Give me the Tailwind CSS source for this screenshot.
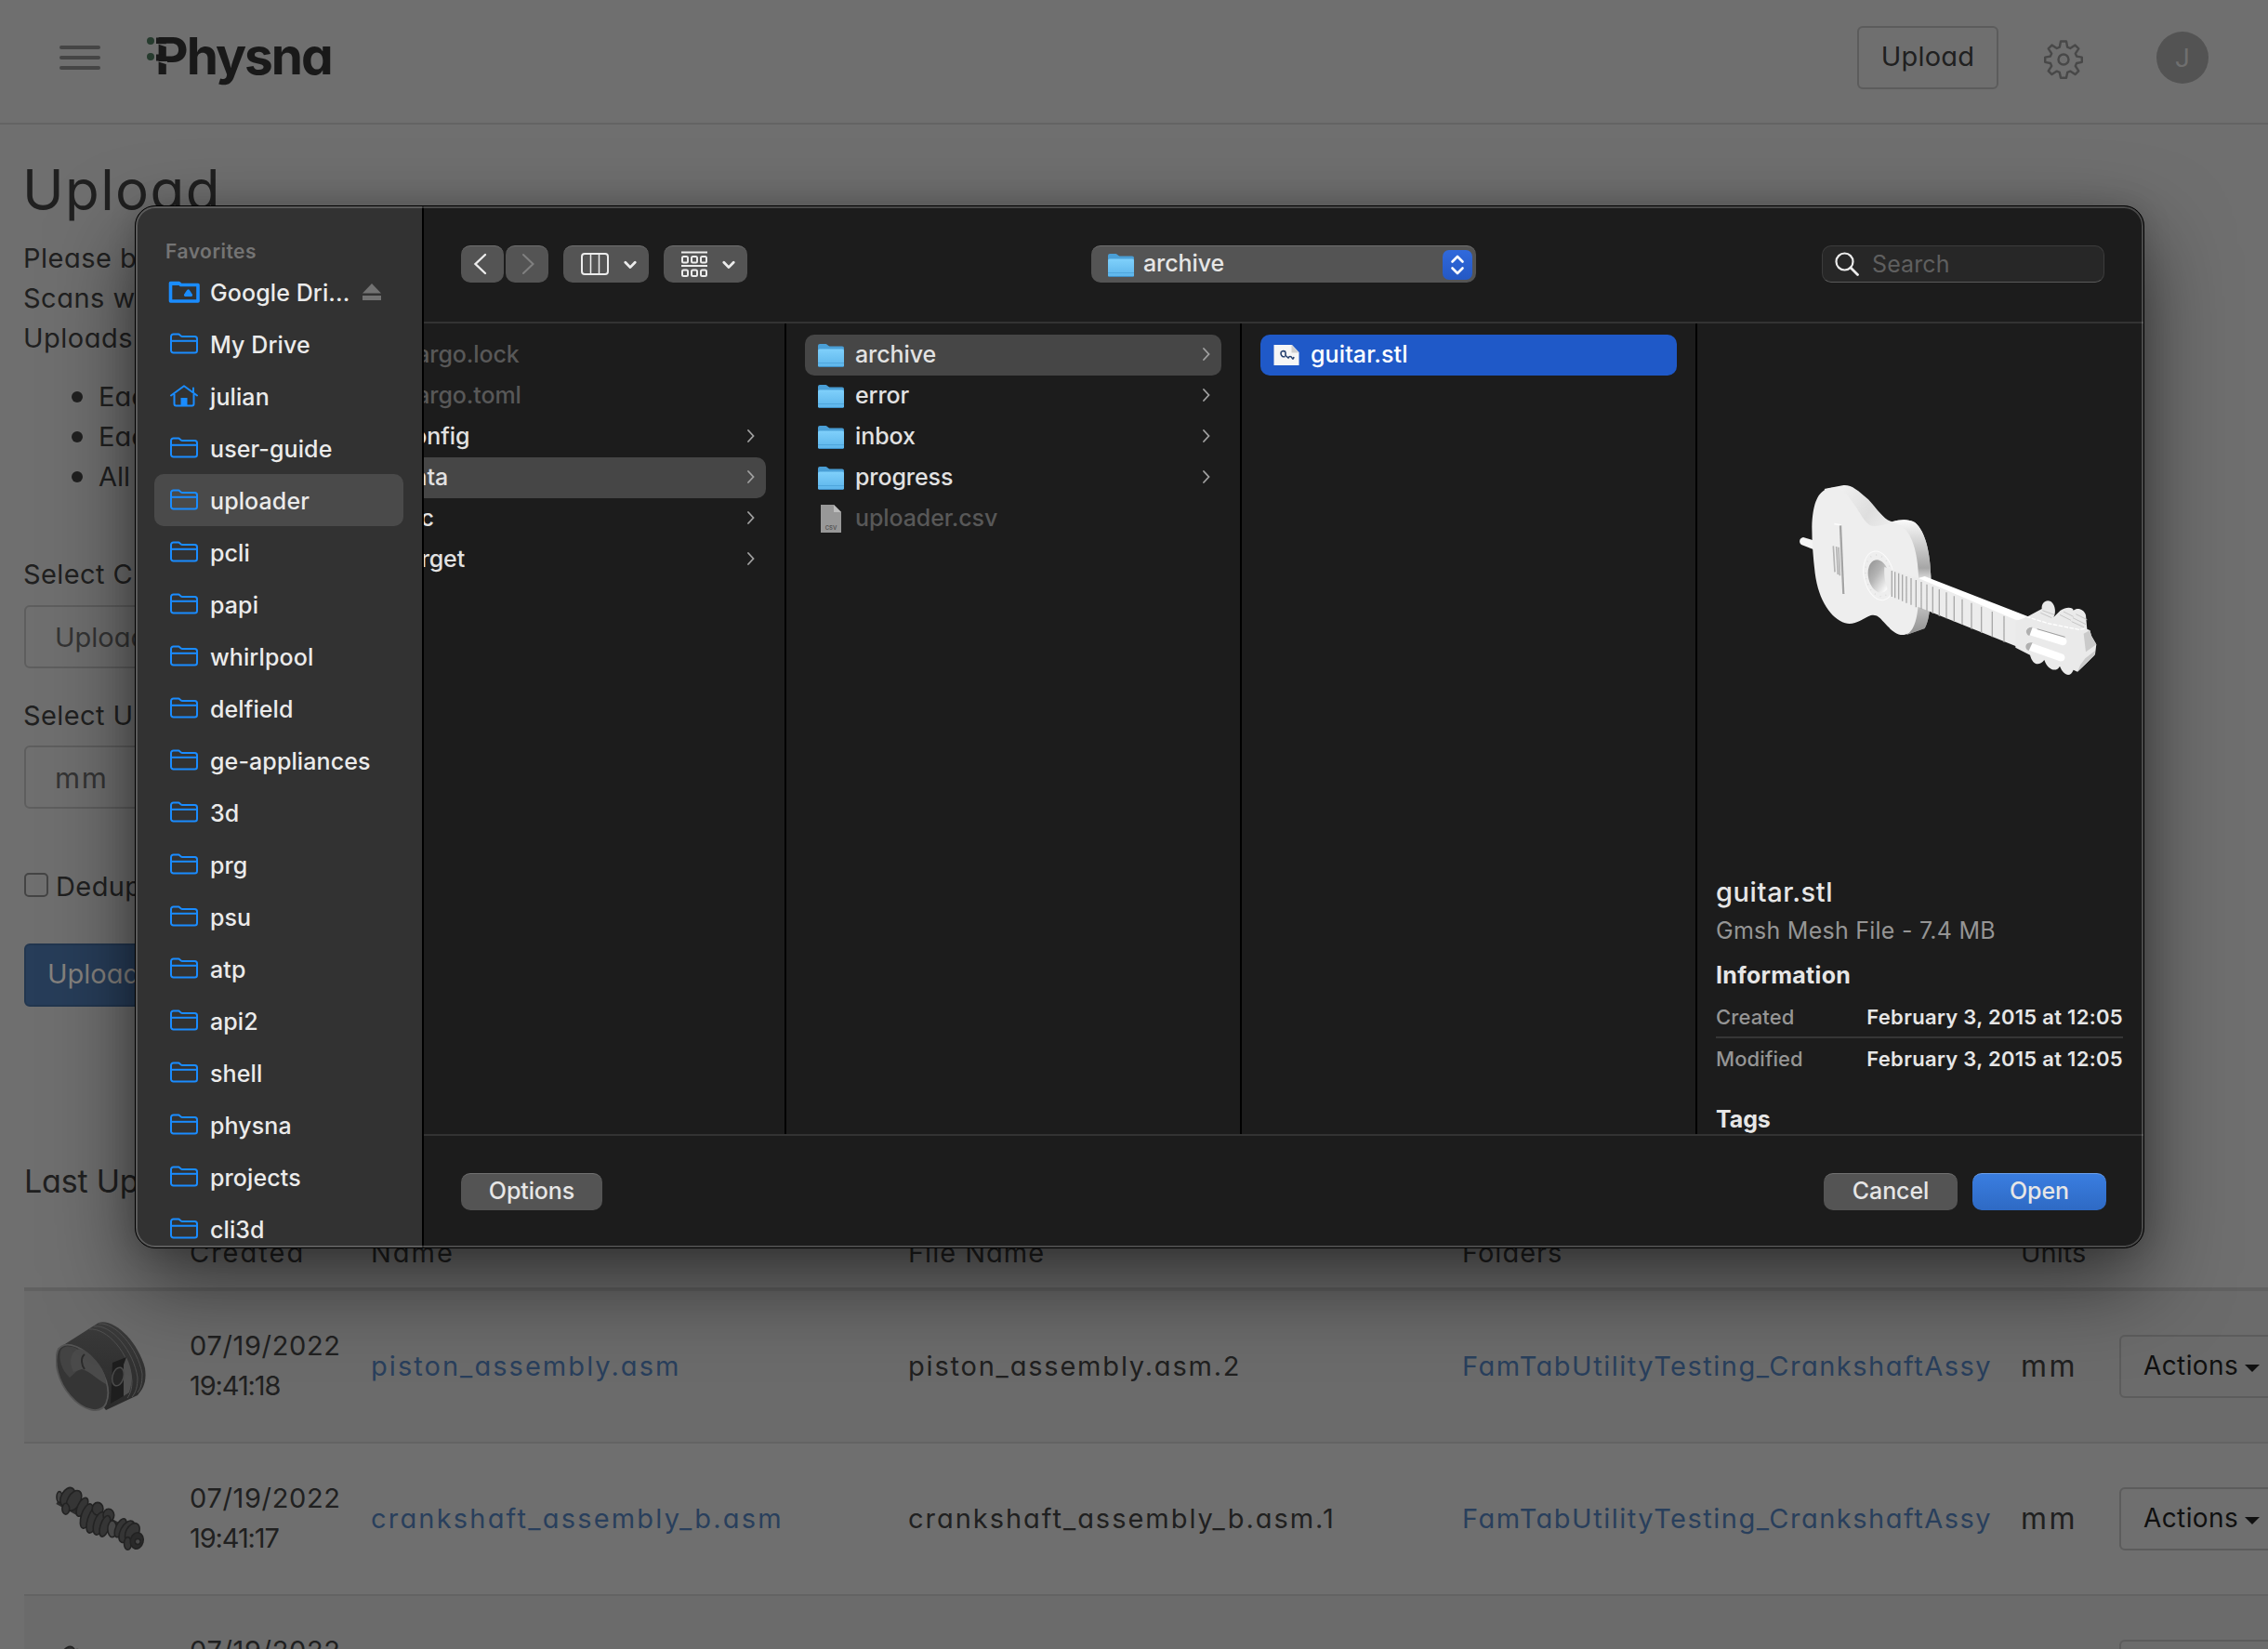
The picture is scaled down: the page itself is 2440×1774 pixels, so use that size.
<!DOCTYPE html>
<html lang="en">
<head>
<meta charset="utf-8">
<title>Physna - Upload</title>
<script src="https://cdn.jsdelivr.net/npm/@tailwindcss/browser@4"></script>
</head>
<body class="relative h-[1774px] w-[2440px] overflow-hidden bg-[#6f6f6f] font-['Inter',sans-serif] text-[29px] leading-[43px] text-[#202020]">

<svg class="absolute size-0">
  <defs>
    <linearGradient id="folderFill" x1="0" y1="0" x2="0" y2="1"><stop offset="0" stop-color="#7fd0fb"/><stop offset="1" stop-color="#5cb4ea"/></linearGradient>
    <linearGradient id="side" x1="0" y1="0" x2="1" y2="1"><stop offset="0" stop-color="#f7f7f7"/><stop offset=".3" stop-color="#dedede"/><stop offset=".5" stop-color="#f2f2f2"/><stop offset="1" stop-color="#8c8c8c"/></linearGradient>
    <linearGradient id="sideRight" x1="0" y1="0" x2="0" y2="1"><stop offset="0" stop-color="#fafafa"/><stop offset=".15" stop-color="#dcdcdc"/><stop offset=".42" stop-color="#a6a6a6"/><stop offset=".52" stop-color="#e0e0e0"/><stop offset=".75" stop-color="#c0c0c0"/><stop offset="1" stop-color="#8f8f8f"/></linearGradient>
    <linearGradient id="hole" x1="0" y1="0" x2=".6" y2="1"><stop offset="0" stop-color="#8f8f8f"/><stop offset=".5" stop-color="#b5b5b5"/><stop offset="1" stop-color="#fafafa"/></linearGradient>
    <linearGradient id="steel" x1="0" y1="0" x2="0" y2="1"><stop offset="0" stop-color="#3b3b3b"/><stop offset="1" stop-color="#2a2a2a"/></linearGradient>
    <symbol id="folder" viewBox="0 0 30 24"><g fill="none" stroke="#1a8cff" stroke-width="2" stroke-linejoin="round"><path d="M1 19V4a2.500 2.500 0 0 1 2.500-2.500h5.500c1.500 0 2 2.500 4 2.500H26.500A2.500 2.500 0 0 1 29 6.500V19a2.500 2.500 0 0 1-2.500 2.500h-23A2.500 2.500 0 0 1 1 19Z"/><path d="M1 8.800H29"/></g></symbol>
    <symbol id="drive" viewBox="0 0 34 24"><path d="M2.500 5V2.500h9l2 2H32V22H2.500Z" fill="none" stroke="#1a8cff" stroke-width="3.600" stroke-linejoin="round"/><path d="M2 2h10l3 3H2Z" fill="#1a8cff"/><path d="M21.500 11l-3 4.500h6Z" fill="#323232" stroke="#1a8cff" stroke-width="3.200" stroke-linejoin="round"/></symbol>
    <symbol id="house" viewBox="0 0 30 24"><path d="M1 11.500 15 1.200 29 11.500M25 8V3.500M4.500 10v10.500a2 2 0 0 0 2 2h17a2 2 0 0 0 2-2V10" fill="none" stroke="#1a8cff" stroke-width="2" stroke-linecap="round" stroke-linejoin="round"/><path d="M11.500 14h7v9h-7Z" fill="#1a8cff"/></symbol>
    <symbol id="fullfolder" viewBox="0 0 28 28"><path d="M0 4A2 2 0 0 1 2 2H8.500c1.500 0 2.500 2.500 4 2.500H26a2 2 0 0 1 2 2V14H0Z" fill="#4a9fd6"/><rect y="7.500" width="28" height="19.500" rx="1.800" fill="url(#folderFill)"/><path d="M0 22.500H28" stroke="#4fa6dc" stroke-width="1"/><path d="M1 26.500H27" stroke="#3f8fc6" stroke-width="1"/></symbol>
    <symbol id="chev" viewBox="0 0 8 14"><path d="M1 1 6.500 7 1 13" fill="none" stroke="#a0a0a0" stroke-width="1.800" stroke-linecap="round"/></symbol>
    <symbol id="down" viewBox="0 0 14 10"><path d="M1.800 2.200 7 7.600 12.200 2.200" fill="none" stroke="#ececec" stroke-width="2.800" stroke-linecap="round" stroke-linejoin="round"/></symbol>
    <symbol id="csv" viewBox="0 0 28 32"><path d="M3 1H17l8 8V31H3Z" fill="#989898"/><path d="M17 1V9H25Z" fill="#bdbdbd"/><text x="14" y="28" text-anchor="middle" font-family="Inter" font-size="6" font-weight="600" fill="#555">CSV</text></symbol>
    <symbol id="stl" viewBox="0 0 28 24"><path d="M1 1H20l7.500 8V23H.5V1Z" fill="#f6f6f6"/><path d="M19.500 1V9.500H27.500Z" fill="#cfcfcf"/><path d="M13 8.500c-2-1.500-5-1-5 1.500s2 4.500 4.500 3.500M13 8.500v4l3 2.500c1-2 3-2 4 0s1.500 1 2-1" fill="none" stroke="#26406e" stroke-width="1.600"/></symbol>
    <symbol id="crank" viewBox="0 0 100 70">
      <path d="M4 12 92 60" stroke="#2c2c2c" stroke-width="15"/>
      <g fill="#353535" stroke="#232323" stroke-width="1.600">
        <ellipse cx="4" cy="11" rx="3" ry="6" fill="#444"/><ellipse cx="13" cy="11" rx="7" ry="11" transform="rotate(28 13 11)"/><ellipse cx="20" cy="15" rx="7" ry="12" transform="rotate(28 20 15)"/><ellipse cx="11" cy="24" rx="4" ry="6"/>
        <ellipse cx="29" cy="22" rx="5" ry="11" transform="rotate(25 29 22)"/><ellipse cx="34" cy="32" rx="6" ry="14" transform="rotate(18 34 32)"/><ellipse cx="41" cy="36" rx="6" ry="15" transform="rotate(18 41 36)"/><ellipse cx="46" cy="24" rx="6" ry="7"/>
        <ellipse cx="48" cy="40" rx="6" ry="13" transform="rotate(18 48 40)"/><ellipse cx="58" cy="31" rx="6" ry="7"/><ellipse cx="54" cy="43" rx="5" ry="12" transform="rotate(18 54 43)"/><ellipse cx="62" cy="46" rx="5" ry="9" fill="#474747"/>
        <ellipse cx="71" cy="45" rx="5" ry="11" transform="rotate(25 71 45)"/><ellipse cx="78" cy="49" rx="7" ry="13" transform="rotate(28 78 49)"/><ellipse cx="84" cy="50" rx="7" ry="11" transform="rotate(28 84 50)"/><ellipse cx="79" cy="62" rx="4" ry="7"/><ellipse cx="89" cy="59" rx="7" ry="9" transform="rotate(15 89 59)" fill="#2a2a2a"/><circle cx="90" cy="60" r="3" fill="#4a4a4a"/>
      </g>
    </symbol>
  </defs>
</svg>

<header class="flex h-[134px] items-center border-b-2 border-[#636363] pl-16">
  <svg class="mb-2 h-[26px] w-11" viewBox="0 0 44 26"><path d="M2 2H42M2 13H42M2 24H42" stroke="#454545" stroke-width="4" stroke-linecap="round"/></svg>
  <div class="relative mb-3 ml-[50px] h-[60px] w-[210px] text-[55px] leading-[60px] font-bold text-[#191919]">
    <span class="ml-[9px] tracking-[-2px] [font-feature-settings:'cv11']">Physna</span>
    <svg class="absolute top-0 left-0 h-[60px] w-[50px]" viewBox="0 0 50 60">
      <circle cx="4" cy="14" r="4" fill="#263b2e"/><circle cx="4" cy="31" r="4" fill="#263b2e"/>
      <path d="M10 10.500H18V17H10ZM10 28.500H18V35.500H10Z" fill="#191919"/>
      <path d="M11 17.200 22 20.800V17.200ZM11 36 22 39.500V36Z" fill="#6f6f6f"/>
    </svg>
  </div>
  <div class="mb-2 ml-auto flex h-[68px] w-[152px] items-center justify-center rounded-md border-2 border-[#5c5c5c] pb-1 tracking-[0.2px] [font-feature-settings:'cv11']">Upload</div>
  <svg class="mb-1 ml-[49px] h-[42px] w-[42px]" viewBox="0 0 42 42" fill="none" stroke="#484848" stroke-width="2.400" stroke-linejoin="round">
    <circle cx="21" cy="21" r="5.500"/>
    <path d="M18 1.500h6l1.200 6.200 3 1.300 5.300-3.500 3.800 3.800-3.500 5.300 1.300 3 5.700 1v5.200l-5.700 1.200-1.300 3 3.500 5.300-3.800 3.800-5.300-3.500-3 1.300-1.200 5.900h-6l-1.200-5.900-3-1.300-5.300 3.500-3.800-3.800 3.500-5.300-1.300-3-5.700-1.200v-5.200l5.700-1 1.300-3-3.500-5.300 3.800-3.800 5.300 3.500 3-1.300Z"/>
  </svg>
  <div class="mr-16 mb-2 ml-[79px] flex size-14 items-center justify-center rounded-full bg-[#535353] font-['Roboto',sans-serif] text-[28px] text-[#6f6f6f]">J</div>
</header>

<main class="flex h-[1640px] w-[2440px] flex-col overflow-hidden pl-[26px] [font-feature-settings:'cv11']">
  <h1 class="-ml-0.5 mt-[35px] h-[71px] shrink-0 text-[60px] leading-[70px] tracking-[1.4px]">Upload</h1>
  <p class="mt-4 -ml-px tracking-[0.5px]">Please be<br>Scans will<br>Uploads</p>
  <ul class="mt-5 tracking-normal">
    <li class="flex items-center gap-[17px] pl-[51px]"><span class="size-3 rounded-full bg-[#202020]"></span>Each</li>
    <li class="flex items-center gap-[17px] pl-[51px]"><span class="size-3 rounded-full bg-[#202020]"></span>Each</li>
    <li class="flex items-center gap-[17px] pl-[51px]"><span class="size-3 rounded-full bg-[#202020]"></span>All</li>
  </ul>
  <label class="mt-[62px] -ml-px tracking-[0.4px]">Select C</label>
  <div class="mt-[12px] flex h-[68px] w-[900px] shrink-0 items-center rounded-md border-2 border-[#5e5e5e] pl-[31px] text-[#343434]">Upload</div>
  <label class="mt-[29px] -ml-px tracking-[0.4px]">Select U</label>
  <div class="mt-[11px] flex h-[68px] w-[900px] shrink-0 items-center rounded-md border-2 border-[#5e5e5e] pl-[31px] text-[31px] tracking-[1.5px] text-[#343434]">mm</div>
  <div class="mt-[62px] flex h-[43px] shrink-0 items-center gap-2 tracking-[0.4px]"><span class="mb-1 size-[26px] rounded-[5px] border-2 border-[#444]"></span>Dedup</div>
  <div class="mt-10 flex h-[68px] w-[220px] shrink-0 items-center rounded-md border-2 border-[#22364f] bg-[#273d59] pb-1 pl-[23px] text-[#85827e]">Upload</div>
  <h2 class="mt-[163px] h-[50px] shrink-0 text-[34px] leading-[50px] tracking-[-0.2px]">Last Up</h2>
  <div class="grid h-[93px] shrink-0 grid-cols-[178px_195px_578px_596px_601px_106px_160px] items-end border-b-4 border-[#616161] pb-4">
    <span></span><span class="tracking-[2px]">Created</span><span class="tracking-[2px]">Name</span><span class="tracking-[1px]">File Name</span><span class="tracking-[1px]">Folders</span><span>Units</span><span></span>
  </div>
  <div class="grid h-[164px] shrink-0 grid-cols-[178px_195px_578px_596px_601px_106px_170px] items-center border-b-2 border-[#636363] bg-[#6b6b6b]">
    <svg class="ml-[34px] h-[100px] w-[100px]" viewBox="0 0 100 100">
      <path d="M2 31 46 3C62-2 88 22 96 52c2 15-2 22-8 29L54 97Z" fill="url(#steel)"/>
      <path d="M41 7C60 4 84 34 88 62c0 10-2 16-6 21M46 4C64 2 88 30 93 58c0 12-2 16-5 20M36 10C55 8 80 36 82 66c0 8-2 14-5 18" fill="none" stroke="#505050" stroke-width="1"/>
      <path d="M61 46 76 40V80L59 90Z" fill="#1e1e1e"/><path d="M76 40c7 14 7 26 3 38l-6 4V48Z" fill="#505050"/>
      <ellipse cx="67" cy="61" rx="6" ry="10" transform="rotate(15 67 61)" fill="#262626" stroke="#4b4b4b" stroke-width="1.500"/>
      <path d="M2 33C8 22 24 26 38 40 54 56 60 76 54 90c-6 12-24 8-38-8C2 66-2 46 2 33Z" fill="#353535" stroke="#555" stroke-width="1.800"/>
      <path d="M5 34c2-6 10-7 18-3l2 22-10 9C6 54 3 42 5 34Z" fill="#434343"/>
      <path d="M20 34c5-6 14-2 26 13 6 8 8 15 8 22C44 64 38 56 28 53l-9 3c-4-8-4-17 1-22Z" fill="#4a4a4a"/><path d="M31 37c-5 4-3 12 0 16" fill="none" stroke="#2b2b2b" stroke-width="2"/>
    </svg>
    <div class="mb-0.5 tracking-[0.65px]">07/19/2022<br><span class="tracking-[-1.1px]">19:41:18</span></div>
    <span class="mb-0.5 tracking-[2.05px] text-[#293f5c]">piston_assembly.asm</span>
    <span class="mb-0.5 tracking-[1.8px]">piston_assembly.asm.2</span>
    <span class="mb-0.5 tracking-[1.5px] text-[#293f5c]">FamTabUtilityTesting_CrankshaftAssy</span>
    <span class="mb-0.5 text-[32px] tracking-[2.5px]">mm</span>
    <div class="flex h-[68px] w-[170px] items-center rounded-md border-2 border-[#5c5c5c] pb-0.5 pl-6 text-[28px] tracking-[0.4px] text-[#101010]">Actions<svg class="mt-1.5 ml-[7px] h-2 w-4" viewBox="0 0 16 8"><path d="M0 0H16L8 8Z" fill="#101010"/></svg></div>
  </div>
  <div class="grid h-[164px] shrink-0 grid-cols-[178px_195px_578px_596px_601px_106px_170px] items-center border-b-2 border-[#636363]">
    <svg class="ml-[34px] h-[70px] w-[98px]"><use href="#crank"/></svg>
    <div class="mb-0.5 tracking-[0.65px]">07/19/2022<br><span class="tracking-[-1.1px]">19:41:17</span></div>
    <span class="mb-0.5 tracking-[2.2px] text-[#293f5c]">crankshaft_assembly_b.asm</span>
    <span class="mb-0.5 tracking-[1.97px]">crankshaft_assembly_b.asm.1</span>
    <span class="mb-0.5 tracking-[1.5px] text-[#293f5c]">FamTabUtilityTesting_CrankshaftAssy</span>
    <span class="mb-0.5 text-[32px] tracking-[2.5px]">mm</span>
    <div class="flex h-[68px] w-[170px] items-center rounded-md border-2 border-[#5c5c5c] pb-0.5 pl-6 text-[28px] tracking-[0.4px] text-[#101010]">Actions<svg class="mt-1.5 ml-[7px] h-2 w-4" viewBox="0 0 16 8"><path d="M0 0H16L8 8Z" fill="#101010"/></svg></div>
  </div>
  <div class="grid h-[164px] shrink-0 grid-cols-[178px_195px_578px_596px_601px_106px_170px] items-center bg-[#6b6b6b]">
    <svg class="mt-3 ml-[34px] h-[70px] w-[98px]"><use href="#crank"/></svg>
    <div class="mb-1 tracking-[0.65px]">07/19/2022<br>&nbsp;</div>
    <span></span><span></span><span></span><span></span>
    <div class="mb-0.5 h-[68px] w-[170px] rounded-md border-2 border-[#5c5c5c]"></div>
  </div>
</main>

<!-- File picker window -->
<section class="absolute top-[221px] left-[145px] flex h-[1122px] w-[2162px] overflow-hidden rounded-[22px] border border-black bg-[#1c1c1c] text-[25px] leading-8 font-medium tracking-[-0.1px] text-[#e6e6e6] shadow-[0_36px_90px_rgba(0,0,0,0.55),0_0_30px_rgba(0,0,0,0.15)]">
  <aside class="flex w-[310px] shrink-0 flex-col border-r-2 border-black bg-[#323232] px-5 pt-[33px]">
    <div class="h-[31px] shrink-0 pl-3 text-[21px] leading-[31px] font-semibold tracking-[0.5px] text-[#747474]">Favorites</div>
    <nav id="favorites" class="flex flex-col tracking-[0.1px]"></nav>
  </aside>

  <div class="flex min-w-0 flex-1 flex-col">
    <div class="flex h-[126px] shrink-0 items-center border-b-2 border-[#333] pl-10">
      <div class="flex h-10 w-[46px] items-center justify-center rounded-[10px] border-t border-[#707070] bg-[#545454]"><svg class="mb-0.5 ml-[-4px] h-6 w-4" viewBox="0 0 16 24"><path d="M13 2 2.500 12 13 22" fill="none" stroke="#ececec" stroke-width="2.400" stroke-linecap="round"/></svg></div>
      <div class="ml-0.5 flex h-10 w-[46px] items-center justify-center rounded-[10px] border-t border-[#707070] bg-[#545454]"><svg class="mb-0.5 ml-[2px] h-6 w-4" viewBox="0 0 16 24"><path d="M3 2 13.500 12 3 22" fill="none" stroke="#808080" stroke-width="2" stroke-linecap="round"/></svg></div>
      <div class="ml-4 flex h-10 w-[92px] items-center rounded-[10px] border-t border-[#707070] bg-[#545454] pl-[19px]"><svg class="mb-0.5 h-6 w-[30px]" viewBox="0 0 30 24"><rect x="1" y="1" width="28" height="22" rx="3" fill="none" stroke="#ececec" stroke-width="2"/><path d="M10.500 1V23M19.500 1V23" stroke="#ececec" stroke-width="1.500"/></svg><svg class="ml-4 h-2.5 w-3.5"><use href="#down"/></svg></div>
      <div class="ml-4 flex h-10 w-[90px] items-center rounded-[10px] border-t border-[#707070] bg-[#545454] pl-[19px]"><svg class="mb-0.5 h-7 w-7" viewBox="0 0 28 28" fill="none" stroke="#ececec" stroke-width="2"><path d="M0 1.500H28M0 16H28"/><rect x="1" y="6" width="6" height="6.500" rx="1.500"/><rect x="11" y="6" width="6" height="6.500" rx="1.500"/><rect x="21" y="6" width="6" height="6.500" rx="1.500"/><rect x="1" y="20.500" width="6" height="6.500" rx="1.500"/><rect x="11" y="20.500" width="6" height="6.500" rx="1.500"/><rect x="21" y="20.500" width="6" height="6.500" rx="1.500"/></svg><svg class="ml-4 h-2.5 w-3.5"><use href="#down"/></svg></div>
      <div class="ml-[370px] flex h-10 w-[414px] items-center rounded-[10px] border-t border-[#707070] bg-[#545454] pr-1 pl-[18px]">
        <svg class="size-7"><use href="#fullfolder"/></svg><span class="mb-1 ml-2.5">archive</span>
        <div class="ml-auto flex size-8 items-center justify-center rounded-[7px] bg-[linear-gradient(#3069dc,#2458c4)]"><svg class="h-[22px] w-4" viewBox="0 0 16 22"><path d="M2.500 7.500 8 2 13.500 7.500M2.500 14.500 8 20 13.500 14.500" fill="none" stroke="#fff" stroke-width="2.600" stroke-linecap="round" stroke-linejoin="round"/></svg></div>
      </div>
      <div class="ml-[372px] flex h-10 w-[304px] items-center rounded-[10px] border border-[#3c3c3c] border-b-[#5a5a5a] bg-[#272727] pl-[13px]"><svg class="size-[26px]" viewBox="0 0 26 26"><circle cx="10.500" cy="10.500" r="9" fill="none" stroke="#ececec" stroke-width="2.200"/><path d="M17 17 24.500 24.500" stroke="#ececec" stroke-width="2.800" stroke-linecap="round"/></svg><span class="ml-3.5 font-normal tracking-[0.1px] text-[#5f5f5f]">Search</span></div>
    </div>

    <div class="flex h-[872px] shrink-0">
      <div class="w-[390px] overflow-hidden border-r-2 border-black pt-3"><div id="col-project" class="-ml-20 w-[448px]"></div></div>
      <div class="w-[490px] border-r-2 border-black px-5 pt-3"><div id="col-data"></div></div>
      <div class="w-[490px] border-r-2 border-black px-5 pt-3"><div class="flex h-11 items-center rounded-[10px] bg-[#1f59c8] pl-3.5 text-white"><svg class="h-6 w-7"><use href="#stl"/></svg><span class="mb-0.5 ml-3 tracking-[0.1px]">guitar.stl</span></div></div>
      <div class="flex flex-1 flex-col overflow-hidden pr-[22px] pl-5">
        <svg class="mt-[152px] ml-[74px] h-[250px] w-[360px] shrink-0" viewBox="0 0 1080 750">
          <path d="M60 234 100 246V276L54 258C44 250 48 236 60 234Z" fill="#f5f5f5"/>
          <path d="M128 78 190 66C216 64 236 82 270 112 300 145 322 180 348 184 372 176 400 174 420 186 456 215 470 290 472 360 473 430 470 500 452 528L395 548 280 300Z" fill="url(#side)"/>
          <path d="M345 184C372 176 400 174 420 186 456 215 470 290 472 360 473 430 470 500 452 528L395 548 410 300 370 192Z" fill="url(#sideRight)"/>
          <path d="M88 200C90 130 105 92 132 80 165 66 185 78 205 102 250 158 258 198 290 198 320 196 345 182 370 194 412 212 430 290 432 360 436 440 430 520 402 542 370 562 345 535 320 508 305 490 295 482 278 486 250 498 225 520 195 511 150 495 110 440 98 350 92 300 88 250 88 200Z" fill="#eee"/>
          <path d="M160 191 180 194 194 416" fill="none" stroke="#fbfbfb" stroke-width="5"/><path d="M180 196 190 417" stroke="#a4a4a4" stroke-width="7"/>
          <path d="M157 262 162 346M167 264 172 354M174 266 178 358" stroke="#b4b4b4" stroke-width="5"/>
          <ellipse cx="304" cy="358" rx="48" ry="80" transform="rotate(-12 304 358)" fill="#eee" stroke="#fbfbfb" stroke-width="3"/>
          <ellipse cx="304" cy="358" rx="42" ry="68" transform="rotate(-12 304 358)" fill="none" stroke="#dadada" stroke-width="4" stroke-dasharray="3 16"/>
          <ellipse cx="304" cy="360" rx="34" ry="54" transform="rotate(-12 304 360)" fill="url(#hole)"/>
          <path d="M322 330 345 338 432 366 450 362 780 490 770 590 745 585 344 424C324 390 320 360 322 330Z" fill="#ececec"/>
          <path d="M432 366 452 360 782 488 770 502 745 500Z" fill="#fff"/>
          <path d="M346 342V426M356 346V430M368 350V434M380 355V440M393 360V446M408 366V452M424 372V460M441 378V466M459 386V472M478 394V480M499 402V488M522 412V496M547 424V506M573 434V516M603 446V530M635 458V542M670 474V556M708 488V572" stroke="#a9a9a9" stroke-width="4"/>
          <path d="M780 492 830 465C828 445 845 432 860 442 875 455 876 480 868 492L890 470C910 456 932 460 932 470 945 460 965 465 972 485L976 530 985 534 990 552 1006 580 1002 612 975 640 945 668 932 662C922 688 900 680 888 650 878 670 850 665 838 630 820 652 800 645 792 614L745 590 745 505Z" fill="#eaeaea"/>
          <path d="M832 470 870 484M826 478 862 494M900 474 932 490M888 484 924 502M940 482 976 500M930 494 972 515M926 506 966 524" stroke="#c6c6c6" stroke-width="3"/>
          <path d="M780 490 850 512 950 532 975 528" fill="none" stroke="#fff" stroke-width="4" stroke-dasharray="14 4"/>
          <path d="M965 545 985 534 990 552 1006 580 972 604ZM970 625 1002 600 1000 615 945 668 955 645Z" fill="#cacaca"/>
          <path d="M792 537 898 570M790 586 892 622" stroke="#fff" stroke-width="25" stroke-linecap="round"/>
          <path d="M800 524C776 522 774 546 790 552ZM800 574C774 570 772 594 788 600Z" fill="#b0b0b0"/><path d="M815 530 905 556" stroke="#777" stroke-width="2"/>
        </svg>
        <div class="mt-[190px] h-10 text-[29px] leading-10 tracking-[0.6px]">guitar.stl</div>
        <div class="mt-[5px] font-normal tracking-[0.25px] text-[#959595]">Gmsh Mesh File - 7.4 MB</div>
        <div class="mt-4 font-bold tracking-[0.3px]">Information</div>
        <div class="mt-3.5 flex h-[40px] justify-between border-b-2 border-[#363636] text-[22px] leading-[30px]"><span class="tracking-[0.1px] text-[#959595]">Created</span><span class="font-semibold tracking-[0.3px]">February 3, 2015 at 12:05</span></div>
        <div class="mt-[7px] flex justify-between text-[22px] leading-[30px]"><span class="tracking-[0.1px] text-[#959595]">Modified</span><span class="font-semibold tracking-[0.3px]">February 3, 2015 at 12:05</span></div>
        <div class="mt-[34px] font-bold">Tags</div>
      </div>
    </div>

    <div class="flex h-[122px] shrink-0 items-center border-t-2 border-[#333] px-10">
      <div class="flex h-10 w-[152px] items-center justify-center rounded-[10px] border-t border-[#707070] bg-[#545454] pb-1">Options</div>
      <div class="ml-auto flex h-10 w-36 items-center justify-center rounded-[10px] border-t border-[#707070] bg-[#545454] pb-1">Cancel</div>
      <div class="ml-4 flex h-10 w-36 items-center justify-center rounded-[10px] border-t border-[#6aa0ee] bg-[linear-gradient(#3a7de0,#2e6ac4)] pb-1">Open</div>
    </div>
  </div>
  <div class="pointer-events-none absolute inset-0 rounded-[21px] border-2 border-white/20"></div>
</section>

<script>
const favorites = ['Google Dri...', 'My Drive', 'julian', 'user-guide', 'uploader', 'pcli', 'papi', 'whirlpool', 'delfield', 'ge-appliances', '3d', 'prg', 'psu', 'atp', 'api2', 'shell', 'physna', 'projects', 'cli3d'];
document.getElementById('favorites').innerHTML = favorites.map((name, i) => `
  <div class="flex h-14 shrink-0 items-center rounded-[10px] pl-[15px] text-[#ebebeb] ${name === 'uploader' ? 'bg-[#4a4a4a]' : ''}">
    <svg class="h-6 w-[34px] shrink-0 ${i ? 'px-0.5' : ''}"><use href="#${i === 0 ? 'drive' : i === 2 ? 'house' : 'folder'}"/></svg>
    <span class="mt-0.5 ml-[11px]">${name}</span>
    ${i ? '' : '<svg class="ml-auto mr-6 h-[18px] w-5" viewBox="0 0 20 18"><path d="M10 0 20 10.500H0ZM0 13H20V18H0Z" fill="#727272"/></svg>'}
  </div>`).join('');

const row = ({ name, icon, selected, file }) => `
  <div class="flex h-11 items-center rounded-[10px] pr-3 pl-3.5 ${selected ? 'bg-[#464646]' : ''} ${file ? 'text-[#585858]' : 'text-[#e2e2e2]'}">
    <svg class="h-8 w-7 shrink-0"><use href="#${icon || 'fullfolder'}"/></svg>
    <span class="mb-0.5 ml-3">${name}</span>
    ${file ? '' : '<svg class="ml-auto mb-0.5 h-3.5 w-2"><use href="#chev"/></svg>'}
  </div>`;
document.getElementById('col-project').innerHTML = [
  { name: 'Cargo.lock', icon: 'csv', file: true }, { name: 'Cargo.toml', icon: 'csv', file: true },
  { name: 'config' }, { name: 'data', selected: true }, { name: 'src' }, { name: 'target' }].map(row).join('');
document.getElementById('col-data').innerHTML = [
  { name: 'archive', selected: true }, { name: 'error' }, { name: 'inbox' }, { name: 'progress' },
  { name: 'uploader.csv', icon: 'csv', file: true }].map(row).join('');
</script>
</body>
</html>
